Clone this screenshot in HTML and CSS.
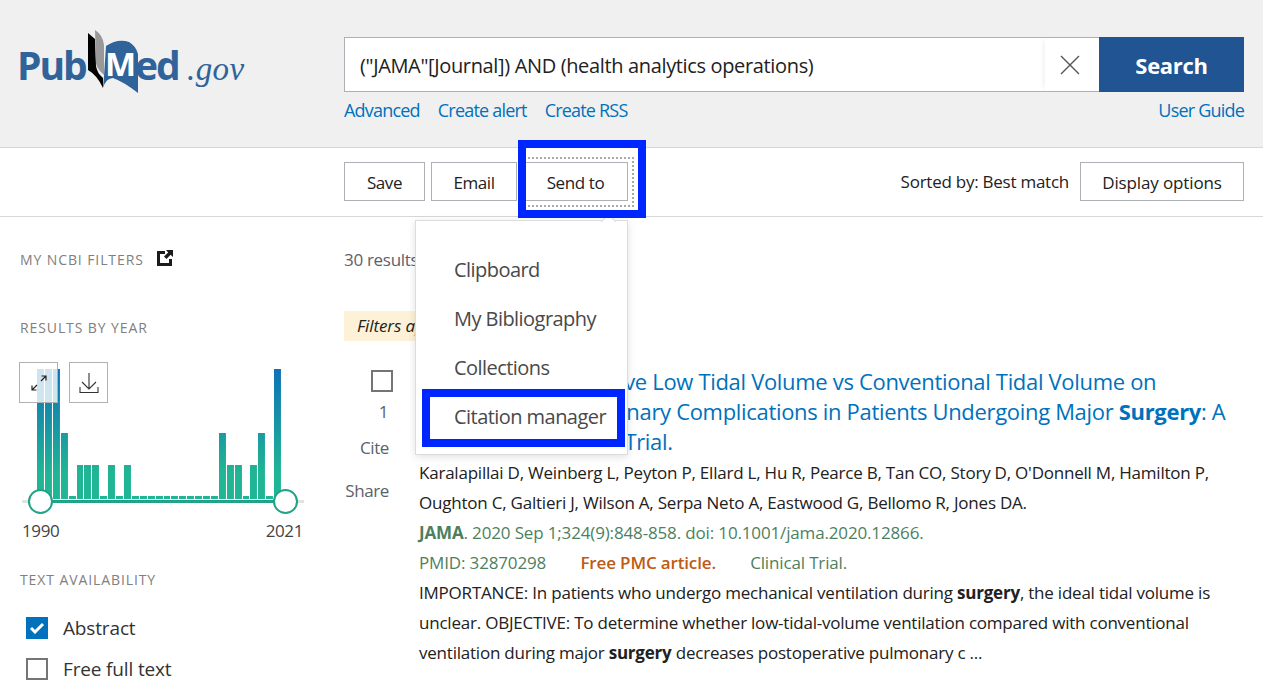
FILE: index.html
```html
<!DOCTYPE html>
<html lang="en">
<head>
    <meta charset="UTF-8">
    <meta name="viewport" content="width=device-width, initial-scale=1.0">
    <title>PubMed search results</title>
    <link rel="stylesheet" href="styles.css">
</head>
<body>
    <header class="masthead">
        <a class="logo" href="#">
            <svg width="326" height="110" viewBox="0 0 326 110">
                <text x="17" y="80" class="logo-word">Pub</text>
                <path d="M88 33 L95 39 L96 66 Q97 73 103 78 L103 88 Q97 75 88 70 Z" fill="#000"/>
                <path d="M95 30 Q103 35 104 45 L104 75 Q98 70 96 64 Z" fill="#999"/>
                <path d="M106 46 Q118 38 129 42 Q136 46 138 54 L138 93 Q124 82 113 78 Q106 78 103 88 L104 76 Z" fill="#2f6399"/>
                <text x="105" y="76" class="logo-m">M</text>
                <text x="135" y="80" class="logo-word">ed</text>
                <text x="187" y="80" class="logo-gov">.gov</text>
            </svg>
        </a>
        <div class="search-col">
            <form class="search-row">
                <div class="search-box">
                    <span class="search-term">("JAMA"[Journal]) AND (health analytics operations)</span>
                    <span class="clear-btn">
                        <svg width="20" height="20" viewBox="0 0 20 20"><path d="M1 1 L19 19 M19 1 L1 19" stroke="#555" stroke-width="1.4" fill="none"/></svg>
                    </span>
                </div>
                <button type="button" class="search-btn">Search</button>
            </form>
            <div class="search-links">
                <a href="#">Advanced</a>
                <a href="#">Create alert</a>
                <a href="#">Create RSS</a>
                <a href="#" class="guide">User Guide</a>
            </div>
        </div>
    </header>

    <div class="toolbar">
        <button type="button" class="tool-btn btn-save">Save</button>
        <button type="button" class="tool-btn btn-email">Email</button>
        <button type="button" class="tool-btn btn-send">Send to</button>
        <span class="sort-label">Sorted by: Best match</span>
        <button type="button" class="tool-btn btn-display">Display options</button>
    </div>

    <div class="main">
        <aside class="sidebar">
            <div class="side-head ncbi-head">
                MY NCBI FILTERS
                <svg width="16" height="16" viewBox="0 0 16 16"><path d="M0 1 H8 V4 H3 V13 H12 V9 H15 V16 H0 Z" fill="#1b1b1b"/><path d="M9 0 H16 V7 L13.6 4.8 L9.5 9 L7 6.5 L11.2 2.4 Z" fill="#1b1b1b"/></svg>
            </div>
            <div class="side-head year-head">RESULTS BY YEAR</div>
            <div class="year-chart">
                <div class="bars">
                    <i style="height:130px"></i><i style="height:130px"></i><i style="height:130px"></i><i style="height:66px"></i>
                    <i style="height:3px"></i><i style="height:34px"></i><i style="height:34px"></i><i style="height:34px"></i>
                    <i style="height:3px"></i><i style="height:34px"></i><i style="height:3px"></i><i style="height:34px"></i>
                    <i style="height:3px"></i><i style="height:3px"></i><i style="height:3px"></i><i style="height:3px"></i>
                    <i style="height:3px"></i><i style="height:3px"></i><i style="height:3px"></i><i style="height:3px"></i>
                    <i style="height:3px"></i><i style="height:3px"></i><i style="height:3px"></i><i style="height:66px"></i>
                    <i style="height:34px"></i><i style="height:34px"></i><i style="height:3px"></i><i style="height:34px"></i>
                    <i style="height:66px"></i><i style="height:3px"></i><i style="height:130px"></i>
                </div>
                <div class="chart-btns">
                    <span class="chart-btn">
                        <svg width="18" height="18" viewBox="0 0 18 18"><path d="M11 7 L16 2 M11.5 2 H16 V6.5 M7 11 L2 16 M2 11.5 V16 H6.5" stroke="#222" stroke-width="1.2" fill="none"/></svg>
                    </span>
                    <span class="chart-btn">
                        <svg width="20" height="20" viewBox="0 0 20 20"><path d="M10 0 V16 M3 9 L10 16 L17 9 M1 14 V19.5 H19 V14" stroke="#333" stroke-width="1.1" fill="none"/></svg>
                    </span>
                </div>
                <div class="slider-track"></div>
                <span class="handle handle-from"></span>
                <span class="handle handle-to"></span>
                <div class="year-labels"><span>1990</span><span>2021</span></div>
            </div>
            <div class="side-head avail-head">TEXT AVAILABILITY</div>
            <label class="check-row">
                <span class="box box-on">
                    <svg width="16" height="12" viewBox="0 0 16 12"><path d="M2 6 L6 10 L14 2" stroke="#fff" stroke-width="3" fill="none"/></svg>
                </span>
                Abstract
            </label>
            <label class="check-row">
                <span class="box"></span>
                Free full text
            </label>
        </aside>

        <section class="results">
            <div class="results-count">30 results</div>
            <div class="filters-note">Filters applied: Abstract.</div>
            <article class="result">
                <div class="result-side">
                    <span class="box"></span>
                    <span class="result-num">1</span>
                    <span class="side-link cite">Cite</span>
                    <span class="side-link share">Share</span>
                </div>
                <div class="result-body">
                    <a class="result-title" href="#">Effect of Intraoperative Low Tidal Volume vs Conventional Tidal Volume on<br>Postoperative Pulmonary Complications in Patients Undergoing Major <b>Surgery</b>: A<br>Randomized Clinical Trial.</a>
                    <div class="authors">Karalapillai D, Weinberg L, Peyton P, Ellard L, Hu R, Pearce B, Tan CO, Story D, O'Donnell M, Hamilton P,<br>Oughton C, Galtieri J, Wilson A, Serpa Neto A, Eastwood G, Bellomo R, Jones DA.</div>
                    <div class="citation"><b>JAMA</b>. 2020 Sep 1;324(9):848-858. doi: 10.1001/jama.2020.12866.</div>
                    <div class="citation">
                        <span class="pmid">PMID: 32870298</span>
                        <span class="free">Free PMC article.</span>
                        <span>Clinical Trial.</span>
                    </div>
                    <p class="snippet">IMPORTANCE: In patients who undergo mechanical ventilation during <b>surgery</b>, the ideal tidal volume is<br>unclear. OBJECTIVE: To determine whether low-tidal-volume ventilation compared with conventional<br>ventilation during major <b>surgery</b> decreases postoperative pulmonary c ...</p>
                </div>
            </article>
        </section>
    </div>

    <!-- dropdown and the two highlight boxes sit over the page -->
    <div class="send-menu">
        <a href="#">Clipboard</a>
        <a href="#">My Bibliography</a>
        <a href="#">Collections</a>
        <a href="#">Citation manager</a>
    </div>
    <div class="dotted-focus"></div>
    <div class="mark mark-send"></div>
    <div class="mark mark-citation"></div>
</body>
</html>
```
FILE: styles.css
```css
* {
    box-sizing: border-box;
}
html, body {
    overflow: hidden;
}
body {
    margin: 0;
    height: 690px;
    position: relative;
    font-family: "Open Sans", "Noto Sans", sans-serif;
    font-size: 16px;
    color: #212121;
    background: white;
}
a {
    color: #0071bc;
    text-decoration: none;
}

/* header */
.masthead {
    display: flex;
    height: 148px;
    background-color: #f0f0f0;
    border-bottom: 1px solid #d6d7d9;
}
.logo {
    width: 344px;
    height: 110px;
    flex: none;
}
.logo svg {
    display: block;
}
.logo-word {
    font-family: "Open Sans", sans-serif;
    font-weight: 700;
    font-size: 39px;
    letter-spacing: -2px;
    fill: #2f6399;
}
.logo-m {
    font-family: "Open Sans", sans-serif;
    font-weight: 700;
    font-size: 33px;
    fill: white;
}
.logo-gov {
    font-family: "Liberation Serif", serif;
    font-style: italic;
    font-size: 33px;
    letter-spacing: 0.4px;
    fill: #2f6399;
}
.search-col {
    width: 900px;
    padding-top: 37px;
}
.search-row {
    display: flex;
    height: 55px;
    margin: 0;
}
.search-box {
    flex: 1;
    display: flex;
    align-items: center;
    justify-content: space-between;
    background: white;
    border: 1px solid #aeb0b5;
    border-right: none;
    padding-left: 15px;
}
.search-term {
    padding-top: 1px;
    font-size: 20px;
    letter-spacing: -0.35px;
    color: #212121;
}
.clear-btn {
    width: 54px;
    height: 53px;
    display: flex;
    align-items: center;
    justify-content: center;
    padding-right: 5px;
    box-shadow: -4px 0 5px -3px rgba(0, 0, 0, 0.08);
}
.clear-btn svg {
    display: block;
}
.search-btn {
    width: 145px;
    border: none;
    background-color: #205493;
    color: white;
    font-family: inherit;
    font-size: 22px;
    font-weight: 700;
    letter-spacing: -0.3px;
}
.search-links {
    display: flex;
    gap: 18px;
    margin-top: 6px;
    font-size: 18px;
    line-height: 24px;
    letter-spacing: -0.8px;
}
.search-links .guide {
    margin-left: auto;
}

/* toolbar */
.toolbar {
    display: flex;
    align-items: flex-start;
    height: 69px;
    padding: 14px 19px 0 344px;
    border-bottom: 1px solid #d6d7d9;
}
.tool-btn {
    height: 39px;
    background: white;
    border: 1px solid #aeb0b5;
    font-family: inherit;
    font-size: 17px;
    letter-spacing: -0.4px;
    color: #212121;
    padding: 1px 0 0;
}
.btn-save {
    width: 81px;
}
.btn-email {
    width: 86px;
    margin-left: 6px;
}
.btn-send {
    width: 105px;
    margin-left: 6px;
}
.sort-label {
    margin-left: auto;
    line-height: 39px;
    font-size: 17px;
    letter-spacing: -0.25px;
}
.btn-display {
    width: 164px;
    margin-left: 11px;
    letter-spacing: -0.13px;
}

/* main columns */
.main {
    display: flex;
}
.sidebar {
    width: 344px;
    flex: none;
    padding-left: 19px;
}
.side-head {
    padding-left: 1px;
    font-size: 14px;
    line-height: 20px;
    letter-spacing: 0.9px;
    color: #808080;
}
.ncbi-head {
    display: flex;
    align-items: center;
    gap: 13px;
    margin-top: 33px;
    height: 20px;
}
.ncbi-head svg {
    margin-top: -4px;
}
.year-head {
    margin-top: 48px;
}

/* results by year */
.year-chart {
    position: relative;
    height: 179px;
    margin-top: 24px;
}
.bars {
    position: absolute;
    left: 18px;
    top: 7px;
    width: 244px;
    height: 130px;
    display: flex;
    align-items: flex-end;
    gap: 1px;
}
.bars i {
    flex: 1;
    background: linear-gradient(to bottom, #0f71b7, #20b594 80%) bottom / 100% 130px no-repeat;
}
.chart-btns {
    position: absolute;
    left: 0;
    top: 0;
    display: flex;
    gap: 11px;
}
.chart-btn {
    width: 39px;
    height: 41px;
    display: flex;
    align-items: center;
    justify-content: center;
    border: 1px solid #b1b1b1;
    background: rgba(255, 255, 255, 0.8);
}
.slider-track {
    position: absolute;
    left: 3px;
    top: 138px;
    width: 282px;
    height: 3px;
    background: linear-gradient(to right, #e2e2e2 6px, #20a386 6px, #20a386 276px, #e2e2e2 276px);
}
.handle {
    position: absolute;
    top: 127px;
    width: 25px;
    height: 25px;
    border-radius: 50%;
    background: white;
    border: 2px solid #20a386;
}
.handle-from {
    left: 9px;
}
.handle-to {
    left: 254px;
}
.year-labels {
    position: absolute;
    left: 3px;
    top: 156px;
    width: 281px;
    display: flex;
    justify-content: space-between;
    font-size: 17px;
    line-height: 26px;
    letter-spacing: -0.4px;
    color: #444;
}
.avail-head {
    margin-top: 29px;
}
.check-row {
    display: flex;
    align-items: center;
    gap: 15px;
    height: 22px;
    margin: 19px 0 0 7px;
    font-size: 19px;
    letter-spacing: -0.15px;
    color: #333;
}
.avail-head + .check-row {
    margin-top: 27px;
}
.box {
    display: flex;
    align-items: center;
    justify-content: center;
    width: 22px;
    height: 22px;
    flex: none;
    border: 2px solid #757575;
    background: white;
}
.box-on {
    border: none;
    background-color: #0071bc;
}

/* results */
.results {
    flex: 1;
    padding-right: 19px;
}
.results-count {
    margin-top: 30px;
    line-height: 26px;
    font-size: 17px;
    letter-spacing: -0.3px;
    color: #5b616b;
}
.filters-note {
    width: 260px;
    height: 30px;
    margin-top: 38px;
    padding-left: 13px;
    line-height: 30px;
    font-size: 17px;
    font-style: italic;
    letter-spacing: -0.1px;
    background-color: #fdf1d7;
}
.result {
    display: flex;
    margin-top: 26px;
}
.result-side {
    width: 75px;
    flex: none;
    padding-top: 3px;
    display: flex;
    flex-direction: column;
    align-items: flex-end;
    color: #5b616b;
    font-size: 17px;
    letter-spacing: -0.4px;
}
.result-side .box {
    margin-right: 26px;
}
.result-num {
    margin: 8px 31px 0 0;
    line-height: 24px;
}
.side-link {
    line-height: 24px;
    margin-right: 30px;
}
.cite {
    margin-top: 12px;
}
.share {
    margin-top: 19px;
}
.result-body {
    flex: 1;
    margin-top: -1px;
    font-size: 17px;
    line-height: 30px;
    letter-spacing: -0.22px;
}
.result-title {
    display: block;
    font-size: 22px;
    letter-spacing: -0.32px;
}
.authors {
    margin-top: 2px;
    white-space: nowrap;
}
.citation {
    color: #4d7f5e;
    letter-spacing: -0.15px;
    white-space: nowrap;
}
.pmid {
    margin-right: 30px;
}
.free {
    margin-right: 30px;
    color: #bf5a13;
    font-weight: 600;
}
.snippet {
    margin: 0;
    white-space: nowrap;
}

/* overlays */
.send-menu {
    position: absolute;
    left: 415px;
    top: 220px;
    width: 213px;
    height: 235px;
    padding-top: 24px;
    background: white;
    border: 1px solid #dcdcdc;
    box-shadow: 0 2px 8px rgba(0, 0, 0, 0.12);
}
.send-menu::before {
    content: "";
    position: absolute;
    left: 187px;
    top: -5px;
    width: 10px;
    height: 10px;
    background: white;
    border-left: 1px solid #dcdcdc;
    border-top: 1px solid #dcdcdc;
    transform: rotate(45deg);
}
.send-menu a {
    display: block;
    height: 49px;
    padding-left: 38px;
    line-height: 49px;
    font-size: 20px;
    letter-spacing: -0.55px;
    color: #494949;
}
.dotted-focus {
    position: absolute;
    left: 524px;
    top: 157px;
    width: 110px;
    height: 50px;
    border: 2px dotted #a9a9a9;
}
.mark {
    position: absolute;
    border: 8px solid #0026ff;
}
.mark-send {
    left: 518px;
    top: 140px;
    width: 128px;
    height: 78px;
}
.mark-citation {
    left: 422px;
    top: 389px;
    width: 203px;
    height: 58px;
}
```
